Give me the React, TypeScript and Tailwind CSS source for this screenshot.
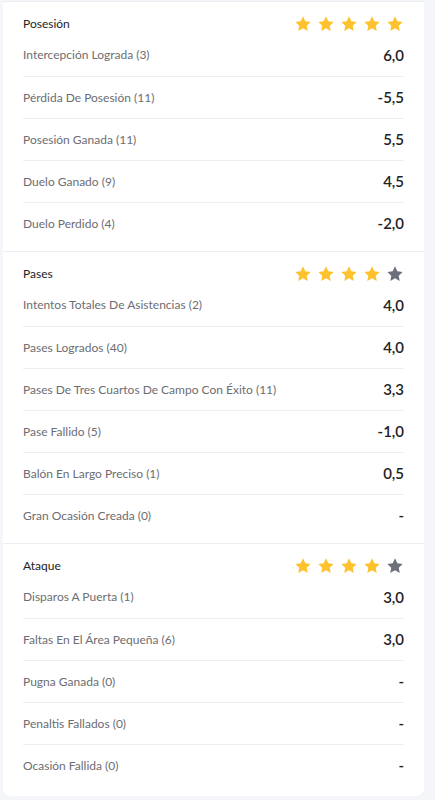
type Row = { label: string; value: string };
type Section = { title: string; stars: number; rows: Row[] };

const sections: Section[] = [
  {
    title: "Posesión",
    stars: 5,
    rows: [
      { label: "Intercepción Lograda (3)", value: "6,0" },
      { label: "Pérdida De Posesión (11)", value: "-5,5" },
      { label: "Posesión Ganada (11)", value: "5,5" },
      { label: "Duelo Ganado (9)", value: "4,5" },
      { label: "Duelo Perdido (4)", value: "-2,0" },
    ],
  },
  {
    title: "Pases",
    stars: 4,
    rows: [
      { label: "Intentos Totales De Asistencias (2)", value: "4,0" },
      { label: "Pases Logrados (40)", value: "4,0" },
      { label: "Pases De Tres Cuartos De Campo Con Éxito (11)", value: "3,3" },
      { label: "Pase Fallido (5)", value: "-1,0" },
      { label: "Balón En Largo Preciso (1)", value: "0,5" },
      { label: "Gran Ocasión Creada (0)", value: "-" },
    ],
  },
  {
    title: "Ataque",
    stars: 4,
    rows: [
      { label: "Disparos A Puerta (1)", value: "3,0" },
      { label: "Faltas En El Área Pequeña (6)", value: "3,0" },
      { label: "Pugna Ganada (0)", value: "-" },
      { label: "Penaltis Fallados (0)", value: "-" },
      { label: "Ocasión Fallida (0)", value: "-" },
    ],
  },
];

function Star({ on }: { on: boolean }) {
  return (
    <svg width="18" height="18" viewBox="0 0 24 24" className={on ? "text-[#fdc22e]" : "text-[#6c707b]"}>
      <path
        fill="currentColor"
        d="M12 1.8l3.1 6.6 7.1.9-5.2 4.9 1.3 7.1L12 17.8l-6.3 3.5L7 14.2 1.8 9.3l7.1-.9z"
      />
    </svg>
  );
}

export default function App() {
  return (
    <div className="min-h-screen bg-[#f5f6f9] pl-[3px] pr-[11px] pt-px pb-1 font-['Lato',sans-serif]">
      <div className="bg-white rounded-b-lg">
        {sections.map((s) => (
          <div key={s.title} className="px-5 pt-3 pb-[7px] last:pb-[10px] border-t border-[#eceef2]">
            <div className="flex items-center justify-between h-5">
              <span className="text-[12px] text-[#222226]">{s.title}</span>
              <div className="flex gap-[5px]">
                {[0, 1, 2, 3, 4].map((n) => (
                  <Star key={n} on={n < s.stars} />
                ))}
              </div>
            </div>
            {s.rows.map((r, j) => (
              <div
                key={r.label}
                className={`flex items-center justify-between h-[42px] ${j > 0 ? "border-t border-[#eceef2]" : ""}`}
              >
                <span className="text-[12px] text-[#6d6d72]">{r.label}</span>
                <span className="text-[15px] font-semibold text-[#222226]">{r.value}</span>
              </div>
            ))}
          </div>
        ))}
      </div>
    </div>
  );
}
